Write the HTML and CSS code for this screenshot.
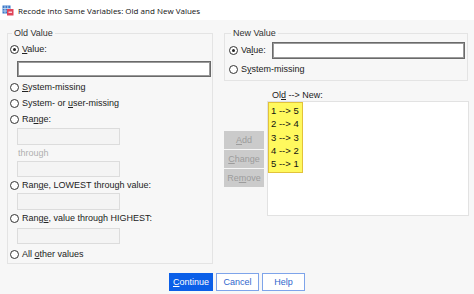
FILE: index.html
```html
<!DOCTYPE html>
<html lang="en">
<head>
    <meta charset="UTF-8">
    <title>Recode into Same Variables: Old and New Values</title>
    <link rel="stylesheet" href="styles.css">
</head>
<body>
    <div class="titlebar">
        <svg class="app-icon" width="12" height="12" viewBox="0 0 12 12">
            <rect x="0.5" y="1.5" width="8" height="8" fill="#3a78c8"/>
            <path d="M0.5 4.5h8M0.5 7h8M3 1.5v8M5.8 1.5v8" stroke="#cfe0f5" stroke-width="0.8"/>
            <rect x="5" y="5" width="6.5" height="6.5" fill="#e0455a"/>
            <path d="M6.5 8.2h3.5" stroke="#fff" stroke-width="1.2"/>
        </svg>
        <span>Recode into Same Variables: Old and New Values</span>
    </div>

    <div class="dialog">
        <div class="columns">
            <fieldset class="group old-group">
                <legend>Old Value</legend>
                <div class="opt"><span class="radio on"></span><span><u>V</u>alue:</span></div>
                <div class="textbox wide"></div>
                <div class="opt gap"><span class="radio"></span><span><u>S</u>ystem-missing</span></div>
                <div class="opt"><span class="radio"></span><span>System- or <u>u</u>ser-missing</span></div>
                <div class="opt"><span class="radio"></span><span>Ra<u>n</u>ge:</span></div>
                <div class="textbox off first"></div>
                <div class="opt muted">through</div>
                <div class="textbox off"></div>
                <div class="opt"><span class="radio"></span><span>Ran<u>g</u>e, LOWEST through value:</span></div>
                <div class="textbox off tall"></div>
                <div class="opt"><span class="radio"></span><span>Rang<u>e</u>, value through HIGHEST:</span></div>
                <div class="textbox off spaced"></div>
                <div class="opt spaced"><span class="radio"></span><span>All <u>o</u>ther values</span></div>
            </fieldset>

            <div class="right-col">
                <fieldset class="group new-group">
                    <legend>New Value</legend>
                    <div class="opt value-row">
                        <span class="radio on"></span><span>Va<u>l</u>ue:</span>
                        <div class="textbox new-box"></div>
                    </div>
                    <div class="opt gap"><span class="radio"></span><span>S<u>y</u>stem-missing</span></div>
                </fieldset>

                <div class="list-label">Ol<u>d</u> --&gt; New:</div>
                <div class="list-row">
                    <div class="side-buttons">
                        <button class="grey-btn"><u>A</u>dd</button>
                        <button class="grey-btn"><u>C</u>hange</button>
                        <button class="grey-btn">Re<u>m</u>ove</button>
                    </div>
                    <div class="listbox">
                        <div class="picked">
                            <div>1 --&gt; 5</div>
                            <div>2 --&gt; 4</div>
                            <div>3 --&gt; 3</div>
                            <div>4 --&gt; 2</div>
                            <div>5 --&gt; 1</div>
                        </div>
                    </div>
                </div>
            </div>
        </div>

        <div class="footer">
            <button class="btn primary"><u>C</u>ontinue</button>
            <button class="btn">Cancel</button>
            <button class="btn">Help</button>
        </div>
    </div>
</body>
</html>
```

FILE: styles.css
```css
body {
    margin: 0;
    padding: 0;
    width: 474px;
    height: 294px;
    overflow: hidden;
    font-family: "Liberation Sans", Arial, sans-serif;
    font-size: 9px;
    color: #222;
    background-color: #f7f7f7;
}

.titlebar {
    height: 20px;
    display: flex;
    align-items: center;
    gap: 4px;
    padding-left: 2px;
    background-color: #fff;
    font-family: "Open Sans", sans-serif;
    font-size: 8px;
    color: #111;
}

.app-icon {
    display: block;
}

.dialog {
    padding: 7px 0 0 7px;
}

.columns {
    display: flex;
    gap: 11px;
}

.group {
    margin: 0;
    border: 1px solid #e4e4e4;
    min-width: 0;
}

.group legend {
    padding: 0 2px;
    margin-left: 2px;
    height: 12px;
    line-height: 12px;
    color: #333;
}

.old-group {
    width: 206px;
    height: 237px;
    padding: 2px 0 0 2px;
    box-sizing: border-box;
}

.opt {
    display: flex;
    align-items: center;
    height: 16px;
    gap: 3px;
    white-space: nowrap;
}

.opt.gap {
    margin-top: 2px;
}

.opt.spaced {
    margin-top: 2px;
}

.muted {
    color: #b0b0b0;
    padding-left: 8px;
}

.radio {
    width: 7px;
    height: 7px;
    border: 1px solid #333;
    border-radius: 50%;
    background-color: #fff;
    position: relative;
    flex: none;
}

.radio.on::after {
    content: "";
    position: absolute;
    left: 2px;
    top: 2px;
    width: 3px;
    height: 3px;
    border-radius: 50%;
    background-color: #222;
}

.textbox {
    height: 16px;
    box-sizing: border-box;
    background-color: #fff;
    border: 1px solid #6a6a6a;
    box-shadow: inset 0 0 0 1px #9a9a9a;
}

.textbox.wide {
    width: 194px;
    margin: 4px 0 0 7px;
}

.textbox.off {
    width: 103px;
    margin-left: 7px;
    background-color: #f4f4f4;
    border: 1px solid #dcdcdc;
    box-shadow: none;
}

.textbox.first {
    height: 17px;
    margin-top: 1px;
}

.textbox.tall {
    height: 17px;
}

.textbox.spaced {
    margin-top: 2px;
}

.right-col {
    width: 245px;
    display: flex;
    flex-direction: column;
}

.new-group {
    width: 244px;
    padding: 2px 0 3px 4px;
    box-sizing: border-box;
}

.value-row {
    height: 18px;
}

.new-box {
    width: 193px;
    height: 17px;
    margin-left: 3px;
}

.list-label {
    margin: 8px 0 0 48px;
    height: 12px;
    line-height: 12px;
}

.list-row {
    display: flex;
    gap: 3px;
}

.side-buttons {
    display: flex;
    flex-direction: column;
    gap: 1px;
    padding-top: 30px;
}

.grey-btn {
    width: 40px;
    height: 18px;
    padding: 0;
    border: none;
    background-color: #cbcbcb;
    color: #9c9c9c;
    font-family: "Liberation Sans", Arial, sans-serif;
    font-size: 9px;
}

.listbox {
    width: 202px;
    height: 115px;
    box-sizing: border-box;
    background-color: #fff;
    border: 1px solid #e2e2e2;
}

.picked {
    width: 35px;
    box-sizing: border-box;
    padding: 1px 0 2px 2px;
    background-color: #fff95e;
    border: 1px solid #e2c23a;
    color: #111;
    font-size: 9.5px;
}

.picked div {
    height: 13.3px;
    line-height: 13.3px;
}

.footer {
    display: flex;
    justify-content: center;
    gap: 3px;
    margin-top: 9px;
    padding-right: 7px;
}

.btn {
    height: 18px;
    width: 43px;
    padding: 0;
    box-sizing: border-box;
    border: 1px solid #7ea4ea;
    background-color: #fff;
    color: #2f66cc;
    font-family: "Liberation Sans", Arial, sans-serif;
    font-size: 9px;
}

.btn.primary {
    width: 44px;
    background-color: #0b5fe8;
    border-color: #0b5fe8;
    color: #fff;
}
```
